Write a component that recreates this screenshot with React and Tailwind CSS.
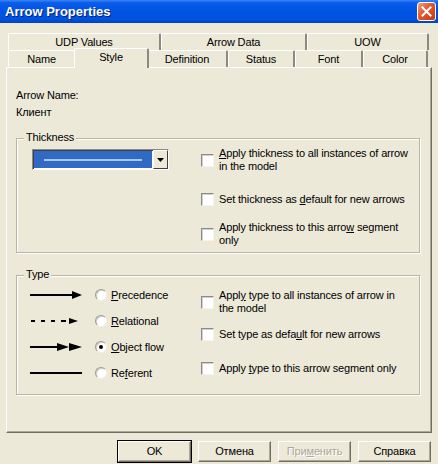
import React from 'react';

const font = { fontFamily: '"Liberation Sans", Arial, sans-serif' };

function U({ children }) {
  return <span className="underline underline-offset-[1px]">{children}</span>;
}

function Checkbox() {
  return (
    <div className="w-[13px] h-[13px] shrink-0 bg-white border border-t-[#8a8a8a] border-l-[#8a8a8a] border-r-[#f4f3ee] border-b-[#f4f3ee] shadow-[inset_1px_1px_0_#d4d0c8]" />
  );
}

function CheckRow({ children, className }) {
  return (
    <div className={`flex items-center gap-[5px] ${className}`}>
      <Checkbox />
      <div className="leading-[13px]">{children}</div>
    </div>
  );
}

function Radio({ checked }) {
  return (
    <div className="w-[12px] h-[12px] shrink-0 rounded-full bg-white border border-t-[#9a9a9a] border-l-[#9a9a9a] border-r-[#f0efe8] border-b-[#f0efe8] shadow-[inset_1px_1px_0_#d4d0c8] flex items-center justify-center">
      {checked && <div className="w-[4px] h-[4px] rounded-full bg-black" />}
    </div>
  );
}

function ArrowIcon({ kind }) {
  return (
    <svg width="54" height="10" viewBox="0 0 54 10" className="shrink-0">
      {kind === 'precedence' && (
        <>
          <rect x="0" y="4" width="44" height="2" fill="#000" />
          <polygon points="42,1 52,5 42,9" fill="#000" />
        </>
      )}
      {kind === 'relational' && (
        <>
          <rect x="1" y="4" width="4" height="2" fill="#000" />
          <rect x="11" y="4" width="4" height="2" fill="#000" />
          <rect x="21" y="4" width="4" height="2" fill="#000" />
          <rect x="31" y="4" width="5" height="2" fill="#000" />
          <polygon points="39,2 48,5 39,8" fill="#000" />
        </>
      )}
      {kind === 'object' && (
        <>
          <rect x="0" y="4" width="30" height="2" fill="#000" />
          <polygon points="27,1 39,5 27,9" fill="#000" />
          <polygon points="39,1 52,5 39,9" fill="#000" />
        </>
      )}
      {kind === 'referent' && <rect x="0" y="4" width="52" height="2" fill="#000" />}
    </svg>
  );
}

function Group({ label, className, children }) {
  return (
    <div className={`relative border border-[#b8b5a6] shadow-[inset_1px_1px_0_#fff,1px_1px_0_#fff] ${className}`}>
      <span className="absolute -top-[8px] left-[7px] px-[2px] bg-[#ece9d8] leading-[13px]">{label}</span>
      {children}
    </div>
  );
}

function Tab({ children, className }) {
  return (
    <div
      className={`h-[17px] flex items-center justify-center border-l border-t border-l-white border-t-white border-r-2 border-r-[#8c8a7e] rounded-tl-[2px] rounded-tr-[2px] leading-[13px] ${className}`}
    >
      {children}
    </div>
  );
}

function Button({ children, isDefault, disabled }) {
  return (
    <div
      className={`w-[75px] h-[23px] flex items-center justify-center ${
        isDefault ? 'border border-black' : 'border border-transparent'
      }`}
    >
      <div className="w-full h-full flex items-center justify-center bg-[#ece9d8] border border-t-white border-l-white border-r-[#716f64] border-b-[#716f64] shadow-[inset_-1px_-1px_0_#aca899]">
        <span className={disabled ? 'text-[#aca899] [text-shadow:1px_1px_0_#fff]' : ''}>{children}</span>
      </div>
    </div>
  );
}

export default function App() {
  return (
    <div className="w-[438px] h-[464px] bg-[#ece9d8] text-black text-[11px] tracking-[-0.15px] overflow-hidden" style={font}>
      {/* Title bar */}
      <div className="h-[23px] flex items-center justify-between pl-[5px] pr-[2px] bg-[linear-gradient(to_bottom,#3a86f5_0%,#0a5de9_12%,#0054e3_50%,#0051dd_85%,#0043c2_100%)]">
        <span className="text-white font-bold text-[13px] tracking-normal [text-shadow:1px_1px_0_#0a1f6e]">Arrow Properties</span>
        <div className="w-[19px] h-[19px] rounded-[3px] border border-white bg-[linear-gradient(135deg,#f0a080_0%,#e2572d_45%,#c23a14_100%)] flex items-center justify-center">
          <svg width="11" height="11" viewBox="0 0 11 11">
            <path d="M1.5 1.5 L9.5 9.5 M9.5 1.5 L1.5 9.5" stroke="#fff" strokeWidth="2" strokeLinecap="square" />
          </svg>
        </div>
      </div>

      {/* Tabs */}
      <div className="mt-[10px] ml-[8px] w-[421px]">
        <div className="flex">
          <Tab className="w-[153px]">UDP Values</Tab>
          <Tab className="w-[146px]">Arrow Data</Tab>
          <Tab className="w-[122px]">UOW</Tab>
        </div>
        <div className="flex items-start h-[17px]">
          <Tab className="w-[68px]">Name</Tab>
          <div className="relative z-10 -mx-[2px] -mt-[2px] w-[75px] h-[20px] bg-[#ece9d8] border-l border-t border-l-white border-t-white border-r-2 border-r-[#8c8a7e] rounded-tl-[2px] rounded-tr-[2px] flex justify-center pt-[2px] leading-[13px]">
            Style
          </div>
          <Tab className="w-[81px]">Definition</Tab>
          <Tab className="w-[67px]">Status</Tab>
          <Tab className="w-[68px]">Font</Tab>
          <Tab className="w-[65px]">Color</Tab>
        </div>
      </div>

      {/* Panel */}
      <div className="ml-[6px] w-[426px] h-[366px] border border-t-white border-l-white border-r-[#716f64] border-b-[#716f64] shadow-[inset_-1px_-1px_0_#aca899] pt-[21px] pl-[9px]">
        <div className="leading-[13px]">Arrow Name:</div>
        <div className="leading-[13px] mt-[4px]">Клиент</div>

        <Group label="Thickness" className="mt-[19px] w-[404px] h-[115px]">
          <div className="flex">
            <div className="ml-[15px] mt-[10px] w-[137px] h-[21px] flex border border-t-[#8a8a8a] border-l-[#8a8a8a] border-r-white border-b-white">
              <div className="flex-1 bg-white p-[1px] shadow-[inset_1px_1px_0_#404040]">
                <div className="h-full bg-[#316ac5] flex items-center pl-[10px] pr-[10px]">
                  <div className="w-full h-[2px] bg-[#a8c8f8]" />
                </div>
              </div>
              <div className="w-[15px] h-full bg-[#ece9d8] border border-t-white border-l-white border-r-[#404040] border-b-[#404040] flex items-center justify-center">
                <svg width="7" height="4" viewBox="0 0 7 4">
                  <polygon points="0,0 7,0 3.5,4" fill="#000" />
                </svg>
              </div>
            </div>
            <div className="ml-[32px] flex flex-col">
              <CheckRow className="mt-[8px]">
                <U>A</U>pply thickness to all instances of arrow
                <br />
                in the model
              </CheckRow>
              <CheckRow className="mt-[20px]">
                Set thickness as <U>d</U>efault for new arrows
              </CheckRow>
              <CheckRow className="mt-[15px]">
                Apply thickness to this arro<U>w</U> segment
                <br />
                only
              </CheckRow>
            </div>
          </div>
        </Group>

        <Group label="Type" className="mt-[22px] w-[404px] h-[120px]">
          <div className="flex">
            <div className="ml-[13px] mt-[6px] w-[171px] shrink-0 flex flex-col">
              {[
                ['precedence', <><U>P</U>recedence</>, false],
                ['relational', <><U>R</U>elational</>, false],
                ['object', <><U>O</U>bject flow</>, true],
                ['referent', <>Re<U>f</U>erent</>, false],
              ].map(([kind, label, checked]) => (
                <div key={kind} className="h-[26px] flex items-center">
                  <ArrowIcon kind={kind} />
                  <div className="ml-[11px]">
                    <Radio checked={checked} />
                  </div>
                  <span className="ml-[4px] leading-[13px]">{label}</span>
                </div>
              ))}
            </div>
            <div className="flex flex-col">
              <CheckRow className="mt-[13px]">
                Appl<U>y</U> type to all instances of arrow in
                <br />
                the model
              </CheckRow>
              <CheckRow className="mt-[13px]">
                Set type as defa<U>u</U>lt for new arrows
              </CheckRow>
              <CheckRow className="mt-[21px]">
                Apply <U>t</U>ype to this arrow segment only
              </CheckRow>
            </div>
          </div>
        </Group>
      </div>

      {/* Buttons */}
      <div className="mt-[7px] w-[432px] flex justify-end gap-[5px]">
        <Button isDefault>OK</Button>
        <Button>Отмена</Button>
        <Button disabled>
          При<U>м</U>енить
        </Button>
        <Button>Справка</Button>
      </div>
    </div>
  );
}
